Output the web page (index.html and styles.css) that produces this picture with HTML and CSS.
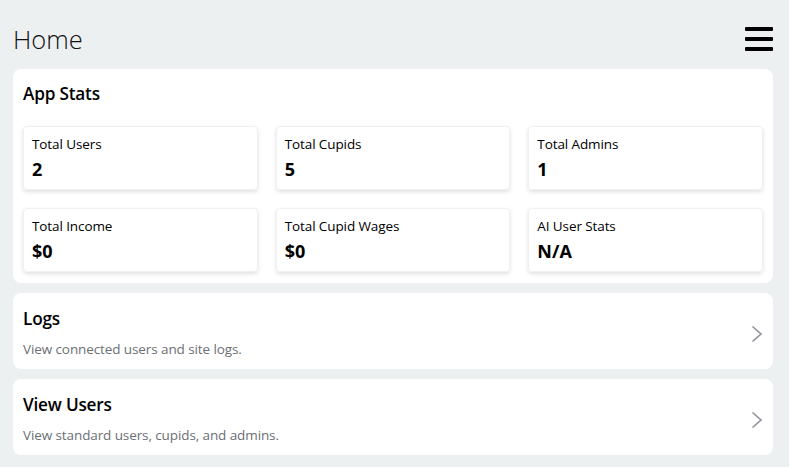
FILE: index.html
```html
<!DOCTYPE html>
<html lang="en">
<head>
<meta charset="utf-8">
<title>Home</title>
<link rel="stylesheet" href="styles.css">
</head>
<body>
<div class="page">
  <header class="topbar">
    <h1 class="title">Home</h1>
    <button class="menu" aria-label="Menu">
      <span class="bar"></span><span class="bar"></span><span class="bar"></span>
    </button>
  </header>

  <section class="card stats">
    <h2 class="card-title">App Stats</h2>
    <div class="stat-grid">
      <div class="stat"><div class="stat-label">Total Users</div><div class="stat-value">2</div></div>
      <div class="stat"><div class="stat-label">Total Cupids</div><div class="stat-value">5</div></div>
      <div class="stat"><div class="stat-label">Total Admins</div><div class="stat-value">1</div></div>
      <div class="stat"><div class="stat-label">Total Income</div><div class="stat-value">$0</div></div>
      <div class="stat"><div class="stat-label">Total Cupid Wages</div><div class="stat-value">$0</div></div>
      <div class="stat"><div class="stat-label">AI User Stats</div><div class="stat-value">N/A</div></div>
    </div>
  </section>

  <a class="card link-card" href="#">
    <div class="link-text">
      <h2 class="card-title">Logs</h2>
      <p class="desc">View connected users and site logs.</p>
    </div>
    <svg class="chev" width="12" height="18" viewBox="0 0 12 18"><path d="M1.5 1.5 L10 9 L1.5 16.5" fill="none" stroke="#8b909a" stroke-width="1.6"/></svg>
  </a>

  <a class="card link-card" href="#">
    <div class="link-text">
      <h2 class="card-title">View Users</h2>
      <p class="desc">View standard users, cupids, and admins.</p>
    </div>
    <svg class="chev" width="12" height="18" viewBox="0 0 12 18"><path d="M1.5 1.5 L10 9 L1.5 16.5" fill="none" stroke="#8b909a" stroke-width="1.6"/></svg>
  </a>
</div>
</body>
</html>
```

FILE: styles.css
```css
* { box-sizing: border-box; }
html, body { margin: 0; padding: 0; }
body {
  background: #edf0f1;
  font-family: "Open Sans", "Noto Sans", "Liberation Sans", sans-serif;
  color: #000;
}
.page {
  padding: 0 16px 0 13px;
  display: flex;
  flex-direction: column;
  gap: 10px;
}
.topbar {
  display: flex;
  align-items: center;
  justify-content: space-between;
  height: 59px;
  padding-top: 19px;
}
.title {
  margin: 0;
  font-size: 25.5px;
  font-weight: 300;
  color: #111;
  letter-spacing: 0;
}
.menu {
  border: 0;
  background: none;
  padding: 0;
  width: 28px;
  height: 24px;
  display: flex;
  flex-direction: column;
  justify-content: space-between;
  margin-top: -1px;
}
.bar {
  display: block;
  height: 4px;
  width: 28px;
  background: #000;
  border-radius: 1px;
}
.card {
  background: #fff;
  border-radius: 8px;
  padding: 0 10px;
}
.stats {
  padding: 13px 10px 11px 10px;
}
.card-title {
  margin: 0;
  font-size: 17.2px;
  font-weight: 600;
  line-height: 24px;
  letter-spacing: -0.2px;
}
.stat-grid {
  margin-top: 20px;
  display: grid;
  grid-template-columns: repeat(3, 1fr);
  column-gap: 18px;
  row-gap: 18px;
}
.stat {
  height: 64px;
  border-radius: 4px;
  border: 1px solid #f0f0f0;
  box-shadow: 0 2px 4px rgba(0,0,0,0.12);
  padding: 7px 8px 8px 8px;
}
.stat-label {
  font-size: 13.5px;
  line-height: 20px;
  letter-spacing: -0.1px;
}
.stat-value {
  font-size: 18px;
  font-weight: 700;
  line-height: 26px;
  margin-top: 2px;
}
.link-card {
  display: flex;
  align-items: center;
  justify-content: space-between;
  text-decoration: none;
  color: inherit;
  height: 76px;
  padding: 13px 10px 10px 10px;
}
.link-card .card-title { line-height: 24px; }
.desc {
  margin: 9px 0 0 0;
  font-size: 13.5px;
  line-height: 18px;
  color: #6b6f75;
  letter-spacing: -0.1px;
}
.chev { flex: none; margin-top: 2px; }
```
